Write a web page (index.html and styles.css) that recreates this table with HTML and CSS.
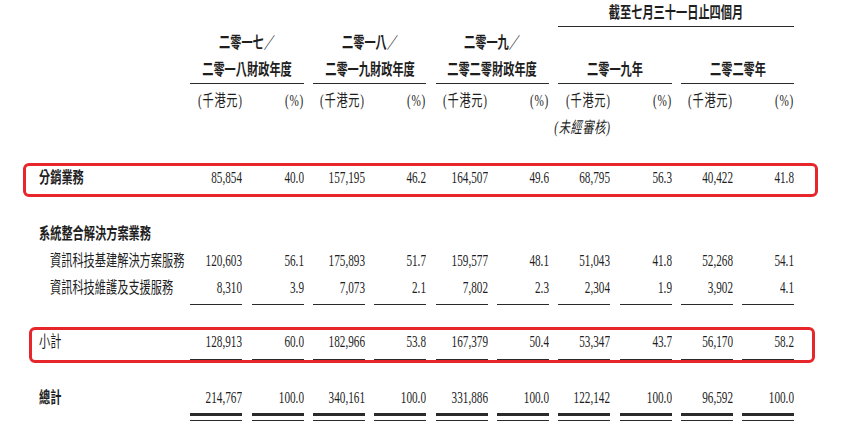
FILE: index.html
```html
<!DOCTYPE html>
<html lang="zh-Hant">
<head>
<meta charset="utf-8">
<title>收益明細</title>
<link rel="stylesheet" href="styles.css">
</head>
<body>
<div class="sheet">
  <div class="row r-top">
    <div class="cell head"><span class="t b">截至七月三十一日止四個月</span></div>
  </div>

  <div class="row r-years">
    <div class="cell year g1"><span class="t b">二零一七／</span><span class="t b">二零一八財政年度</span></div>
    <div class="cell year g2"><span class="t b">二零一八／</span><span class="t b">二零一九財政年度</span></div>
    <div class="cell year g3"><span class="t b">二零一九／</span><span class="t b">二零二零財政年度</span></div>
    <div class="cell year g4"><span class="t b">二零一九年</span></div>
    <div class="cell year g5"><span class="t b">二零二零年</span></div>
  </div>

  <div class="row r-units">
    <div class="cell"></div>
    <div class="cell unit"><span class="t">(千港元)</span></div>
    <div class="cell unit"><span class="t">(%)</span></div>
    <div class="cell unit"><span class="t">(千港元)</span></div>
    <div class="cell unit"><span class="t">(%)</span></div>
    <div class="cell unit"><span class="t">(千港元)</span></div>
    <div class="cell unit"><span class="t">(%)</span></div>
    <div class="cell unit"><span class="t">(千港元)</span><span class="t it">(未經審核)</span></div>
    <div class="cell unit"><span class="t">(%)</span></div>
    <div class="cell unit"><span class="t">(千港元)</span></div>
    <div class="cell unit"><span class="t">(%)</span></div>
  </div>

  <div class="row boxed box1">
    <div class="cell lbl"><span class="t b">分銷業務</span></div>
    <div class="cell"><span class="t">85,854</span></div>
    <div class="cell"><span class="t">40.0</span></div>
    <div class="cell"><span class="t">157,195</span></div>
    <div class="cell"><span class="t">46.2</span></div>
    <div class="cell"><span class="t">164,507</span></div>
    <div class="cell"><span class="t">49.6</span></div>
    <div class="cell"><span class="t">68,795</span></div>
    <div class="cell"><span class="t">56.3</span></div>
    <div class="cell"><span class="t">40,422</span></div>
    <div class="cell"><span class="t">41.8</span></div>
  </div>

  <div class="row r-section">
    <div class="cell lbl"><span class="t b">系統整合解決方案業務</span></div>
  </div>

  <div class="row r-item">
    <div class="cell lbl sub"><span class="t">資訊科技基建解決方案服務</span></div>
    <div class="cell"><span class="t">120,603</span></div>
    <div class="cell"><span class="t">56.1</span></div>
    <div class="cell"><span class="t">175,893</span></div>
    <div class="cell"><span class="t">51.7</span></div>
    <div class="cell"><span class="t">159,577</span></div>
    <div class="cell"><span class="t">48.1</span></div>
    <div class="cell"><span class="t">51,043</span></div>
    <div class="cell"><span class="t">41.8</span></div>
    <div class="cell"><span class="t">52,268</span></div>
    <div class="cell"><span class="t">54.1</span></div>
  </div>

  <div class="row r-item last">
    <div class="cell lbl sub"><span class="t">資訊科技維護及支援服務</span></div>
    <div class="cell num"><span class="t">8,310</span></div>
    <div class="cell num"><span class="t">3.9</span></div>
    <div class="cell num"><span class="t">7,073</span></div>
    <div class="cell num"><span class="t">2.1</span></div>
    <div class="cell num"><span class="t">7,802</span></div>
    <div class="cell num"><span class="t">2.3</span></div>
    <div class="cell num"><span class="t">2,304</span></div>
    <div class="cell num"><span class="t">1.9</span></div>
    <div class="cell num"><span class="t">3,902</span></div>
    <div class="cell num"><span class="t">4.1</span></div>
  </div>

  <div class="row boxed box2">
    <div class="cell lbl"><span class="t">小計</span></div>
    <div class="cell num"><span class="t">128,913</span></div>
    <div class="cell num"><span class="t">60.0</span></div>
    <div class="cell num"><span class="t">182,966</span></div>
    <div class="cell num"><span class="t">53.8</span></div>
    <div class="cell num"><span class="t">167,379</span></div>
    <div class="cell num"><span class="t">50.4</span></div>
    <div class="cell num"><span class="t">53,347</span></div>
    <div class="cell num"><span class="t">43.7</span></div>
    <div class="cell num"><span class="t">56,170</span></div>
    <div class="cell num"><span class="t">58.2</span></div>
  </div>

  <div class="row r-total">
    <div class="cell lbl"><span class="t b">總計</span></div>
    <div class="cell dbl"><span class="t">214,767</span></div>
    <div class="cell dbl"><span class="t">100.0</span></div>
    <div class="cell dbl"><span class="t">340,161</span></div>
    <div class="cell dbl"><span class="t">100.0</span></div>
    <div class="cell dbl"><span class="t">331,886</span></div>
    <div class="cell dbl"><span class="t">100.0</span></div>
    <div class="cell dbl"><span class="t">122,142</span></div>
    <div class="cell dbl"><span class="t">100.0</span></div>
    <div class="cell dbl"><span class="t">96,592</span></div>
    <div class="cell dbl"><span class="t">100.0</span></div>
  </div>
</div>
</body>
</html>
```

FILE: styles.css
```css
* {
  box-sizing: border-box;
  margin: 0;
  padding: 0;
}

body {
  margin: 0;
  background: #ffffff;
  color: #1e1e1e;
  font-family: "Liberation Serif", "Noto Sans CJK TC", serif;
  font-size: 16px;
}

.sheet {
  width: 855px;
  height: 440px;
  overflow: hidden;
}

.row {
  display: grid;
  grid-template-columns: 181px repeat(10, 52px);
  column-gap: 9.333px;
  line-height: 27px;
}

.cell {
  display: flex;
  justify-content: flex-end;
  align-items: flex-start;
  white-space: nowrap;
}

.t {
  display: inline-block;
  transform: scaleX(0.7);
  transform-origin: right center;
}

.b {
  font-weight: 700;
}

.it {
  font-style: italic;
}

/* labels */
.lbl {
  justify-content: flex-start;
  padding-left: 39px;
}

.lbl .t {
  transform-origin: left center;
}

.lbl.sub {
  padding-left: 50px;
}

/* header: period */
.r-top {
  height: 27px;
}

.head {
  grid-column: 8 / span 4;
  justify-content: center;
  line-height: 26px;
  border-bottom: 1px solid #2a2a2a;
}

.head .t,
.year .t {
  transform-origin: center center;
}

/* header: years */
.r-years {
  height: 57px;
}

.year {
  flex-direction: column;
  justify-content: flex-end;
  align-items: center;
  border-bottom: 1px solid #2a2a2a;
}

.g1 { grid-column: 2 / span 2; }
.g2 { grid-column: 4 / span 2; }
.g3 { grid-column: 6 / span 2; }
.g4 { grid-column: 8 / span 2; }
.g5 { grid-column: 10 / span 2; }

/* header: units */
.r-units {
  height: 57px;
}

.unit {
  flex-direction: column;
  justify-content: flex-start;
  align-items: flex-end;
  padding-top: 3px;
}

.unit .t {
  letter-spacing: 1px;
}

/* body rows */
.boxed {
  position: relative;
  line-height: 30px;
}

.boxed::before {
  content: "";
  position: absolute;
  top: 0;
  border: 3px solid #e7262c;
  border-radius: 6px;
  pointer-events: none;
}

.box1 {
  margin-top: 22px;
}

.box1::before {
  left: 23px;
  width: 789px;
  height: 28px;
}

.r-section {
  margin-top: 27px;
}

.box2 {
  margin-top: 22px;
}

.box2::before {
  left: 29px;
  width: 780px;
  height: 30px;
}

.num {
  padding-bottom: 2px;
  border-bottom: 1px solid #2a2a2a;
}

.r-item.last .num {
  padding-bottom: 3px;
}

.r-total {
  margin-top: 24px;
}

.dbl {
  padding-bottom: 9px;
  border-bottom: 1px solid #2a2a2a;
  background: linear-gradient(#2a2a2a, #2a2a2a) no-repeat 0 calc(100% - 4px) / 100% 3px;
}
```
